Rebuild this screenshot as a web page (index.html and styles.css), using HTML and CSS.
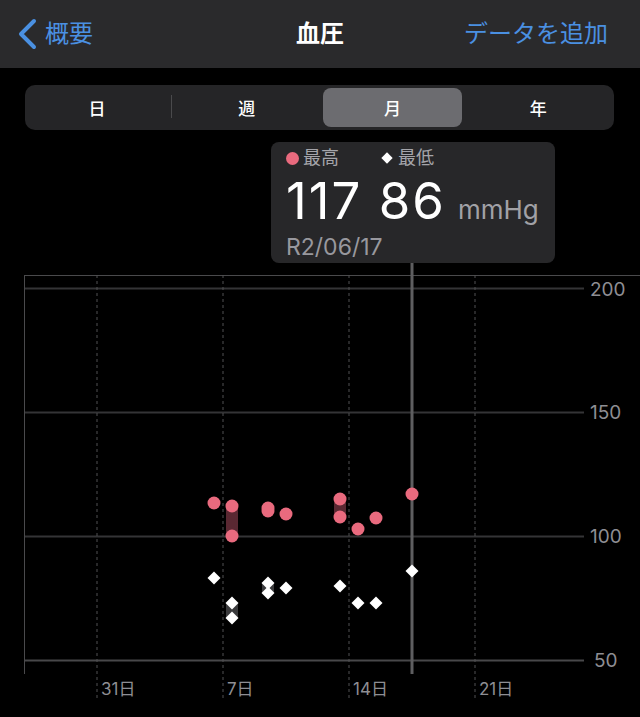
FILE: index.html
```html
<!DOCTYPE html>
<html lang="ja">
<head>
<meta charset="utf-8">
<title>血圧</title>
<link rel="stylesheet" href="styles.css">
</head>
<body>
<header class="nav">
  <a class="nav-back">
    <svg class="chev" width="22" height="32" viewBox="0 0 22 32"><path d="M17 3 L4 16 L17 29" fill="none" stroke="#4a90e2" stroke-width="4" stroke-linecap="round" stroke-linejoin="round"/></svg>
    <span>概要</span>
  </a>
  <h1 class="nav-title">血圧</h1>
  <a class="nav-action">データを追加</a>
</header>

<div class="seg">
  <div class="seg-item sep">日</div>
  <div class="seg-item">週</div>
  <div class="seg-item active">月</div>
  <div class="seg-item">年</div>
</div>

<section class="chart">
  <svg class="plot" width="640" height="587" viewBox="0 130 640 587">
    <g class="grid">
      <line x1="24" y1="275.5" x2="640" y2="275.5" stroke="#4a4a4c" stroke-width="1"/>
      <line x1="24" y1="288.5" x2="584" y2="288.5" stroke="#343436" stroke-width="2"/>
      <line x1="24" y1="412.5" x2="584" y2="412.5" stroke="#343436" stroke-width="2"/>
      <line x1="24" y1="536.5" x2="584" y2="536.5" stroke="#343436" stroke-width="2"/>
      <line x1="24" y1="660.5" x2="584" y2="660.5" stroke="#48484a" stroke-width="2"/>
      <line x1="24.5" y1="275" x2="24.5" y2="674" stroke="#4a4a4c" stroke-width="1"/>
      <line x1="97" y1="275" x2="97" y2="698" stroke="#505052" stroke-width="1" stroke-dasharray="3 3"/>
      <line x1="223" y1="275" x2="223" y2="698" stroke="#505052" stroke-width="1" stroke-dasharray="3 3"/>
      <line x1="349" y1="275" x2="349" y2="698" stroke="#505052" stroke-width="1" stroke-dasharray="3 3"/>
      <line x1="475" y1="275" x2="475" y2="698" stroke="#505052" stroke-width="1" stroke-dasharray="3 3"/>
    </g>
    <g class="ylab">
      <text x="590" y="296">200</text>
      <text x="590" y="419">150</text>
      <text x="590" y="543">100</text>
      <text x="594" y="667">50</text>
    </g>
    <g class="xlab">
      <text x="101" y="695">31日</text>
      <text x="227" y="695">7日</text>
      <text x="353" y="695">14日</text>
      <text x="479" y="695">21日</text>
    </g>
    <rect x="410.5" y="263" width="3" height="411" fill="#5e5e60"/>
    <g class="ranges">
      <rect x="226" y="506" width="12" height="30" fill="#5a2832"/>
      <rect x="334" y="499" width="12" height="18" fill="#5a2832"/>
      <rect x="262" y="508" width="12" height="3" fill="#5a2832"/>
      <rect x="226" y="603" width="12" height="15" fill="#3a3a3c"/>
      <rect x="262" y="583" width="12" height="10" fill="#3a3a3c"/>
    </g>
    <g class="sys" fill="#e96a7e">
      <circle cx="214" cy="503" r="6.5"/>
      <circle cx="232" cy="506" r="6.5"/>
      <circle cx="232" cy="536" r="6.5"/>
      <circle cx="268" cy="508" r="6.5"/>
      <circle cx="268" cy="511" r="6.5"/>
      <circle cx="286" cy="514" r="6.5"/>
      <circle cx="340" cy="499" r="6.5"/>
      <circle cx="340" cy="517" r="6.5"/>
      <circle cx="358" cy="529" r="6.5"/>
      <circle cx="376" cy="518" r="6.5"/>
      <circle cx="412" cy="494" r="6.5"/>
    </g>
    <g class="dia" fill="#ffffff">
      <rect x="-4.6" y="-4.6" width="9.2" height="9.2" transform="translate(214 578) rotate(45)"/>
      <rect x="-4.6" y="-4.6" width="9.2" height="9.2" transform="translate(232 603) rotate(45)"/>
      <rect x="-4.6" y="-4.6" width="9.2" height="9.2" transform="translate(232 618) rotate(45)"/>
      <rect x="-4.6" y="-4.6" width="9.2" height="9.2" transform="translate(268 583) rotate(45)"/>
      <rect x="-4.6" y="-4.6" width="9.2" height="9.2" transform="translate(268 593) rotate(45)"/>
      <rect x="-4.6" y="-4.6" width="9.2" height="9.2" transform="translate(286 588) rotate(45)"/>
      <rect x="-4.6" y="-4.6" width="9.2" height="9.2" transform="translate(340 586) rotate(45)"/>
      <rect x="-4.6" y="-4.6" width="9.2" height="9.2" transform="translate(358 603) rotate(45)"/>
      <rect x="-4.6" y="-4.6" width="9.2" height="9.2" transform="translate(376 603) rotate(45)"/>
      <rect x="-4.6" y="-4.6" width="9.2" height="9.2" transform="translate(412 571) rotate(45)"/>
    </g>
  </svg>

  <div class="tip">
    <div class="tip-legend">
      <span class="lg"><i class="dot"></i>最高</span>
      <span class="lg lg2"><i class="diamond"></i>最低</span>
    </div>
    <div class="tip-value"><span class="num">117 86</span><span class="unit">mmHg</span></div>
    <div class="tip-date">R2/06/17</div>
  </div>
</section>
</body>
</html>
```

FILE: styles.css
```css
html, body {
  margin: 0;
  padding: 0;
  background: #000;
}
body {
  width: 640px;
  height: 717px;
  overflow: hidden;
  font-family: "Inter", "Noto Sans CJK JP", sans-serif;
  color: #fff;
}

.nav {
  height: 68px;
  background: #2a2a2c;
  display: grid;
  grid-template-columns: 1fr auto 1fr;
  align-items: center;
  padding: 0 17px;
}
.nav-back {
  display: flex;
  align-items: center;
  gap: 6px;
  color: #4a90e2;
  font-size: 24px;
  line-height: 32px;
}
.chev { display: block; }
.nav-title {
  margin: 0;
  font-size: 24px;
  font-weight: 700;
  line-height: 32px;
  color: #fff;
}
.nav-action {
  justify-self: end;
  margin-right: 15px;
  color: #4a90e2;
  font-size: 24px;
  line-height: 32px;
}

.seg {
  margin: 17px 26px 0 25px;
  height: 45px;
  box-sizing: border-box;
  padding: 3px;
  border-radius: 10px;
  background: #252527;
  display: grid;
  grid-template-columns: repeat(4, 1fr);
}
.seg-item {
  position: relative;
  display: flex;
  align-items: center;
  justify-content: center;
  font-size: 17px;
  font-weight: 500;
  color: #fff;
  border-radius: 8px;
}
.seg-item.sep { padding-right: 8px; }
.seg-item.active {
  background: #6c6c70;
  margin: 0 3px;
}
.seg-item.sep::after {
  content: "";
  position: absolute;
  right: 2px;
  top: 7px;
  bottom: 9px;
  width: 1px;
  background: #4a4a4c;
}

.chart {
  position: relative;
  height: 587px;
}
.plot { display: block; }
.ylab text {
  font-family: "Inter", sans-serif;
  font-size: 19px;
  fill: #8e8e93;
}
.xlab text {
  font-family: "Inter", "Noto Sans CJK JP", sans-serif;
  font-size: 17px;
  fill: #8e8e93;
}

.tip {
  position: absolute;
  left: 271px;
  top: 12px;
  width: 284px;
  height: 121px;
  box-sizing: border-box;
  padding: 5px 16px 0 15px;
  background: #272729;
  border-radius: 8px;
}
.tip-legend {
  display: flex;
  align-items: center;
  height: 22px;
  font-size: 18px;
  line-height: 22px;
  color: #a5a5aa;
}
.lg {
  display: flex;
  align-items: center;
}
.lg2 { margin-left: 42px; }
.dot {
  width: 13px;
  height: 13px;
  border-radius: 50%;
  background: #e96a7e;
  margin-right: 4px;
}
.diamond {
  width: 8px;
  height: 8px;
  background: #fff;
  transform: rotate(45deg);
  margin: 0 7px 0 2px;
}
.tip-value {
  margin-top: 7px;
  height: 50px;
  line-height: 50px;
  white-space: nowrap;
}
.num {
  font-size: 51px;
  font-weight: 400;
  letter-spacing: 2px;
  color: #fff;
}
.unit {
  font-size: 26px;
  color: #a1a1a6;
  margin-left: 12px;
}
.tip-date {
  margin-top: 8px;
  font-size: 23px;
  line-height: 26px;
  color: #98989e;
}
```
